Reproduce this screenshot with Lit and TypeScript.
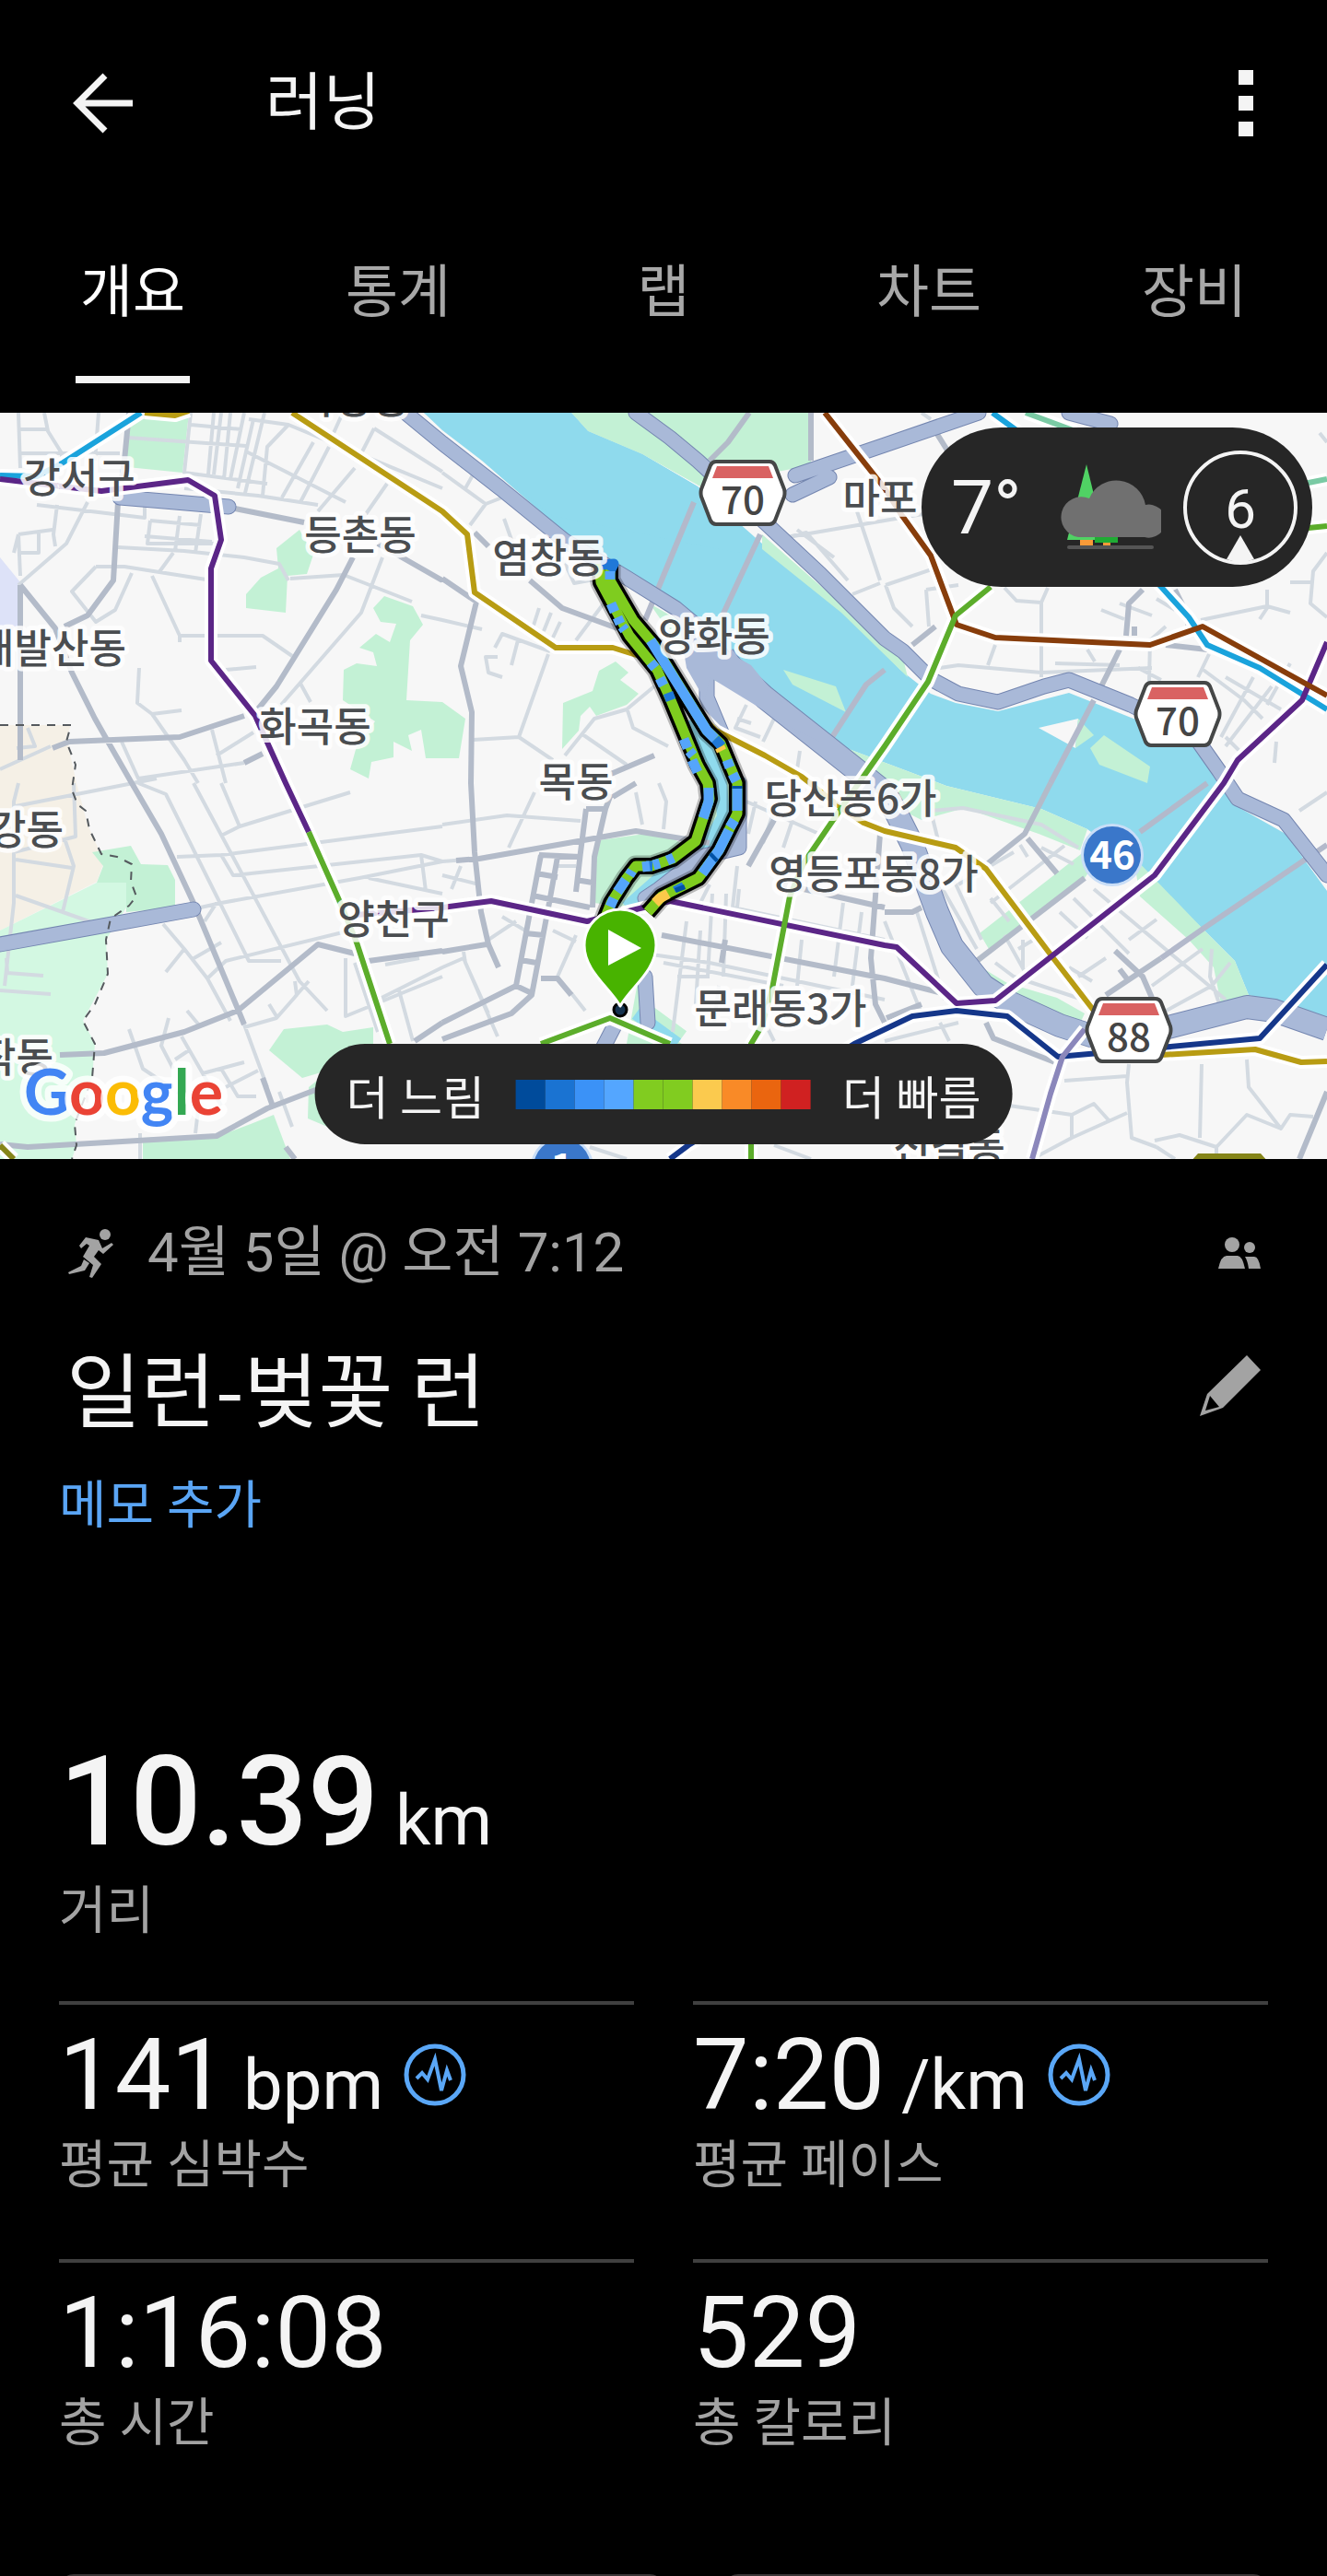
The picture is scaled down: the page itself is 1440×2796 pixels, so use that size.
import { LitElement, css, html, svg } from 'lit'
import { customElement, property, state } from 'lit/decorators.js'

interface Line {
  color: string
  d: string
}

interface Label {
  text: string
  x: number
  y: number
  anchor?: string
}

const minorRoads = [
  'M20 448L22 508M48 448L52 468 67 492 67 500M20 466H50M20 492H130M107 448L103 500M139 475L267 484M207 461L262 466M207 448L200 513 290 525M232 448L226 515M240 448L232 515M250 448L243 520M265 448L250 520M275 455L258 530M287 448L266 535M270 455L313 461 480 530M313 461L290 485 285 538M267 490L375 545M340 480L306 540M357 485L326 545M385 508L345 555M420 525L390 568M200 530L280 538 345 548M372 448L362 470M406 465L388 500M406 465L480 512',
  'M40 548L157 562V548M163 565L218 570M163 565L160 590H240M195 560L190 598M218 558L212 600M157 582L230 588M128 594L200 598 265 605 303 612 313 630M188 600L172 622M62 548L58 580 60 593M95 545L72 590 20 635M20 580L57 575M20 580L15 600M20 580L22 625M42 577V600H20M104 615H135L230 630M104 615L78 642 104 675 125 662 143 622M165 625L195 690H285L317 712M195 690V697M315 628L373 624 447 653M415 605L392 665 305 765M325 740L337 762M245 727L278 724M151 725L149 763 165 775 197 771M165 775L200 825 215 850M132 805L150 845 265 828M230 792L245 850M235 820L275 795M457 668L480 673M30 790L38 810 18 812M0 835L55 810',
  'M20 850L15 870V980L5 1070M17 875L170 845M80 850L82 908 15 925M70 910L80 940 68 990M17 933L78 942M17 972L105 1003M7 1040L8 1056 47 1059M0 1075L55 1079M150 850L180 862 270 1043H305M210 850L325 1065 355 1097M240 850L260 897 380 860M240 907L260 897M192 930L240 928 480 897M240 928L253 950 457 928 480 935M195 990L240 980 390 953 480 935M457 928L462 967M400 953L480 970M235 980L222 1000M177 1003L200 1030 225 1062 250 1108M200 1030L180 1055M207 1042L240 1023M225 1062L245 1043 380 1010M375 1040V1103L480 1060M385 1045L410 1120M410 1085L480 1050M418 1047L455 1040M433 1075L448 1130M320 1065L322 1080 300 1105 265 1115M292 1090L300 1103M335 1065L320 1082M265 1112L290 1180M140 1117L155 1160 200 1190M183 1105L175 1135 188 1160M197 1125L240 1200M203 1097L218 1115M190 1150L205 1140M220 1165L265 1153M240 1160L258 1190H278M280 1162L245 1180M303 1185L317 1223M152 1230V1258M215 1205L212 1230',
  'M480 513L527 547 545 540M527 547L510 570M515 512L505 530M547 563L560 600M610 605L623 633 650 628M655 655L625 695M480 673L523 683M537 703L545 688 597 707M562 695L555 722M585 660L577 685M598 665L590 685M608 675L600 692M540 713L527 713 530 730 545 735M595 710L563 800 600 825M513 803L563 800M710 745L680 770 645 780 613 820M632 797L680 830M680 768L687 790 725 810M855 583L960 565M855 583L875 578 920 630M930 555L955 630M925 645L955 633M865 575L905 605M810 765L798 790 825 800M800 780L815 785M828 805L840 780M868 815L865 835',
  'M480 895L550 885 630 891M580 860L552 920M480 935L520 932M480 950L520 960M500 940L490 965M605 940H625M600 1010L625 1022M545 995L570 1010M530 1020L560 1000M480 1050L503 1040 540 1125M503 1033L505 1045 530 1100M625 1015L605 1060M620 1078L635 1097M690 860L697 895M715 850L723 870 720 900M810 870L900 910M820 870L812 905M840 880L828 915M860 890L850 920M800 940L795 985 960 1020M770 960L760 980M745 1000L730 1120M760 1010L755 1090M720 1045L850 1070M700 1035L770 1045 960 1085M788 970L785 1060M773 970L768 1060M802 965L800 985M915 980L905 1060M935 990L925 1070M870 1020L865 1070M735 1060H770M780 1070L775 1110M830 1110L840 1130M640 1245L680 1258M840 1243L880 1258',
  'M960 565L1020 555M961 635L1020 615M961 635L970 660 990 680M1005 640L1008 680M1005 640L1040 635M1090 638L1103 652 1130 654 1137 638M1130 654V735M1020 725L1040 722 1130 730 1250 725M1080 700L1072 722M1145 720L1215 722M1180 705L1188 718M1195 662L1220 672M1215 655L1250 668M1255 650L1275 662M1303 673L1375 658 1400 665M1375 640V660L1367 672M1265 680L1248 695 1247 740M1235 725L1260 738M1312 710L1300 735M1303 725L1350 760 1370 780M1360 735L1325 800M1380 745L1330 810M1400 720L1375 765M1330 735L1390 770M1385 805L1383 828M1440 600L1425 620 1422 655 1440 670M1400 632H1425M1330 800L1350 820M1000 448L1010 455M1432 470L1440 480',
  'M1010 880L1045 877 1130 895 1170 920M1010 880L1020 920M1107 917L1115 930M1100 925L1040 960M1155 918L1075 980M1130 920L1165 938M1075 975L1095 1000M1020 960L1060 1030M1035 955L1065 1020M1187 965L1330 1085M1165 975L1225 1035M1150 990L1180 1018M1255 998L1225 1020M1335 1045L1315 1070 1260 1100M1305 1030L1250 1070M1090 1015L1115 1060M1105 1030L1125 1018M1080 1045L1100 1060 1220 1100M1170 1060L1200 1040M1160 1050L1185 1065M1110 1020V1050M1315 1030L1313 1060 1325 1095M960 1000L1000 1100M995 990L1025 1085M960 1130L1040 1110M1020 1110L1030 1130M1410 880L1440 860',
  'M1155 1173L1223 1168M1225 1155L1223 1175 1228 1235 1255 1245M1223 1208L1163 1235 1120 1258M1163 1235V1210L1187 1198 1205 1218M1095 1200L1163 1210M1304 1155L1302 1235M1253 1238L1280 1232 1320 1245 1353 1210 1390 1225M1353 1150L1355 1180 1390 1225 1400 1210 1425 1212M1255 1245L1275 1258M1320 1245V1258'
].join('')

const arterialRoads = [
  'M140 448L135 500 128 545 123 630 95 668 70 680M22 635V825M22 635L60 682 78 730 103 780 120 810 143 850 175 905 210 980 258 1095 265 1112M57 812L75 805 195 800 265 777M383 605L365 640 300 745 278 772M255 552L330 567M410 590L480 630M265 828L285 818',
  'M65 1145L113 1143 200 1120 258 1097 345 1025 385 1035M400 1043L480 1032M0 1242L30 1245 235 1233 290 1203 345 1182M285 1170L295 1198M310 1245L320 1258M450 1130L480 1110',
  'M515 578L530 593M480 628L517 653 500 723 512 773 511 850 515 925 522 990 530 1025 541 1050M575 630L610 660 670 682M813 448L790 480 770 500M880 448V500M710 820L663 840M480 1033L528 1025',
  'M495 934L520 932 690 902 770 915M636 878L630 925 625 968M663 862L657 878 645 930 643 985M636 878H657M585 928L630 930M587 928L578 975 560 1070 480 1110M605 930L596 980 577 1080 555 1100 480 1128M578 972L640 985M582 948L605 952M570 1013L590 1015M565 1042L582 1045M560 1070L577 1078M625 955L643 958M718 1015L960 1062 1030 1080M955 905L945 1040 950 1090 960 1110M587 1062H605L620 1080M665 865L690 850M840 890L812 940M850 960L960 985M787 1020L783 1045',
  'M1015 468L1035 500M1240 640L1225 655 1222 690M1231 680V690M1215 705L1195 745M1275 640L1285 660 1290 680M990 700L1015 680M1265 700L1310 705M1140 850L1112 905 1072 937M1115 910L1147 948M1177 953L1060 1043M1260 1040L1200 1080M1210 1032L1240 1060 1250 1083M1215 1052L1225 1065M1070 1110L1078 1127 1150 1155M1440 1185L1410 1258M960 990H990L1000 985M1000 1090L962 1105'
].join('')

const bridges = 'M753 545L700 673M825 580L783 670M960 727L940 743 903 800M1187 760L1140 850M1310 850L1237 903M1440 917L1307 1007 1260 1040'

const wideHighways = 'M785 712L793 723 830 757 897 810 960 860 973 883 990 917 1017 990 1033 1027 1067 1070 1093 1087 1150 1113 1193 1127 1260 1117 1353 1093 1383 1097 1440 1117'

const highways = [
  'M440 448L480 481 543 530 613 587 680 627 733 660 763 685 793 723',
  'M690 448L727 475 757 500 830 567 890 623 960 693 980 707 1010 737 1040 753 1083 762 1133 745 1160 738 1227 765 1297 800 1323 837 1343 867 1393 890 1440 950',
  'M863 516L960 483 1062 448M1160 448L1205 460M130 540L190 545 248 550M0 1025L210 987M767 700V757L785 800M802 850V920L760 930 715 965 700 975M700 1060L703 1110M667 1113L653 1140M860 537L900 518'
].join('')

const parks = [
  'M620 448H880V505L760 528 697 493 638 468Z',
  'M138 455L205 448 198 513 138 507Z',
  'M325 575L340 602 333 623 312 625 310 665 267 660V645L283 627 302 617 300 595Z',
  'M417 647L448 658 459 678 445 695 441 760 480 762 505 780 498 823H462L457 792 443 798 447 815 427 805V822L403 827 400 845 380 835 387 810 407 783 372 760 373 727 387 720 409 723 405 708 390 703 408 688 423 697 430 677 413 675 405 660Z',
  'M668 718L682 730 673 738 693 753 680 765 647 777 640 767 630 777 628 793 610 813 611 763 643 750 650 728Z',
  'M100 925L142 918 153 938 182 939 190 955V985L137 990V958H105L112 940Z',
  'M308 1117L355 1112 372 1120 405 1115V1145L345 1165 328 1170 292 1140Z',
  'M335 1180L360 1160V1225L334 1214Z',
  'M155 1258V1235L240 1232 272 1220 297 1210 315 1258Z',
  'M650 912L700 905 730 910 765 930 710 955 680 985 645 980V950Z',
  'M787 703L813 730 913 810 1027 853 1130 878 1180 900 1172 923 1127 905 1047 877 1000 890 940 860 813 748 760 735 705 655Z',
  'M1173 927L1200 920 1177 953 1073 1030 1063 1013Z',
  'M1060 1047L1093 1067 1147 1083 1177 1100 1170 1115 1090 1090Z',
  'M1230 930L1307 1010 1340 1043 1355 1080 1383 1087 1327 1100 1317 1050 1290 1020 1237 973Z',
  'M693 1060L705 1110 740 1133H680Z'
].join('')

const northBank = 'M827 580L980 715 985 735 913 665 827 596Z'

const islands = 'M850 727L907 745 918 773 860 743ZM1170 780L1187 798 1167 812ZM1198 798L1248 832 1245 850 1193 830 1183 812Z'

const river = 'M460 448H620L638 468 697 493 757 528 827 590 847 603 913 660 977 727 1010 753 1037 763 1083 772 1160 752 1230 780 1297 810 1317 838 1347 878 1395 905 1440 967V1112L1383 1087 1355 1080 1340 1043 1307 1010 1283 987 1247 950 1180 900 1130 878 1027 853 913 810 813 730 787 703 757 670 710 640 680 620 623 587 607 573 523 500 480 467Z'

const stream = 'M753 780L782 850 785 887 770 912 725 945 680 985M690 1100L735 1133'

const subwayLines: Line[] = [
  { color: '#b89c13', d: 'M157 448L190 451 205 446M317 448L480 555 507 580 515 643 603 703H665L697 713 777 793 830 820 870 843 913 877 937 893 960 902 1037 920 1070 943 1143 1040 1187 1097 1230 1147 1260 1145 1362 1139 1412 1153 1440 1152' },
  { color: '#1aa3dc', d: 'M0 516L40 517 67 503 153 448M1077 448L1103 467 1260 637 1290 670 1310 700 1367 725 1440 770' },
  { color: '#5b2687', d: 'M0 520L110 533 204 521 233 538 240 586 229 617V717L277 777 310 850 335 903M387 993L480 985 533 978 637 1000 727 978 960 1026 973 1028 1038 1089 1080 1086 1253 950 1328 850 1343 825 1413 760 1440 697' },
  { color: '#873d0b', d: 'M895 448L960 530 977 557 1010 603 1035 670 1038 678 1080 692 1248 700 1305 680 1440 755' },
  { color: '#15378a', d: 'M1440 1047L1367 1127 1260 1137 1148 1147 1093 1103 1038 1097 990 1103 927 1133 747 1243 727 1258' },
  { color: '#5cad2b', d: 'M335 903L368 977 387 1023 423 1133M1440 571L1410 574M1075 637L1037 668 1007 740 960 810 913 877 872 937 857 973 838 1073 827 1113 815 1133V1258M587 1133L662 1105 727 1133' },
  { color: '#7acaa4', d: 'M1113 448L1167 468M1410 526L1440 520' },
  { color: '#8b87bb', d: 'M1177 1117L1153 1147 1140 1187 1120 1258' },
  { color: '#858519', d: 'M0 1243L15 1258' }
]

const outbound = 'M650 612L652 632 683 690 713 727 728 760 757 830 768 850 770 867 755 913 730 932 707 940 690 940 680 953 663 980 655 1000'
const inbound = 'M662 613V630L687 673 710 700 767 793 782 807 800 850 800 883 780 923 758 953 718 973 703 990'

// Slow and fast stretches, laid over the steady green pace
const paceStretches: Line[] = [
  { color: '#1f78d8', d: 'M652 613L666 612 662 620M725 752L728 760M776 802L783 810M701 940L708 940M735 960L738 966' },
  { color: '#55a5fb', d: 'M662 620V629M663 655L667 664M670 670L673 677M675 680L678 684M706 695L767 793 776 802M706 719L711 725M716 736L720 744M742 802L746 812M748 815L752 820M751 825L757 838M769 855L769 870 763 888M697 941L705 940M709 939L716 937M724 934L731 931M686 945L683 950M679 955L670 968M666 975L662 984M789 825L792 833M795 840L799 848M800 856V880M797 890L792 898M791 901L780 923 762 948' },
  { color: '#0051a5', d: 'M800 853V856M776 929L773 932M737 962L739 967' },
  { color: '#fbc94a', d: 'M725 970L716 975 711 980M781 811L783 815' }
]

const labels: Label[] = [
  { text: '가양동', x: 384, y: 449 },
  { text: '강서구', x: 86, y: 535 },
  { text: '등촌동', x: 391, y: 597 },
  { text: '내발산동', x: 137, y: 720, anchor: 'end' },
  { text: '고강동', x: 69, y: 917, anchor: 'end' },
  { text: '화곡동', x: 342, y: 805 },
  { text: '염창동', x: 595, y: 622 },
  { text: '양화동', x: 775, y: 707 },
  { text: '마포', x: 955, y: 557 },
  { text: '목동', x: 625, y: 865 },
  { text: '당산동6가', x: 923, y: 883 },
  { text: '영등포동8가', x: 948, y: 965 },
  { text: '양천구', x: 427, y: 1014 },
  { text: '문래동3가', x: 847, y: 1111 },
  { text: '작동', x: 58, y: 1164, anchor: 'end' },
  { text: '신길동', x: 1030, y: 1262 }
]

const shields = [
  { text: '70', x: 806, y: 535 },
  { text: '70', x: 1278, y: 775 },
  { text: '88', x: 1225, y: 1118 }
]

const circleShields = [
  { text: '46', x: 1207, y: 928 },
  { text: '1', x: 610, y: 1267 }
]

@customElement('route-map')
export class RouteMap extends LitElement {
  static get styles() {
    return css`
      :host {
        display: block;
      }
      svg {
        display: block;
        width: 100%;
      }
      path {
        stroke-linejoin: round;
      }
      .line {
        fill: none;
      }
      .land { fill: #f7f7f7; }
      .town { fill: #f5f0e6; }
      .meadow { fill: #d3f8e2; }
      .airport { fill: #dde2f8; }
      .park { fill: #c3f1d5; }
      .water { fill: #8fdaed; }
      .stream { stroke: #8fdaed; stroke-width: 14; }
      .stream-bank { stroke: #c3f1d5; stroke-width: 34; }
      .minor { stroke: #d3dae1; stroke-width: 4; }
      .arterial { stroke: #b3bbc9; stroke-width: 6; }
      .bridge { stroke: #b3b9cb; stroke-width: 6; }
      .wide-highway-edge { stroke: #7486b0; stroke-width: 26; }
      .wide-highway { stroke: #a9b9d8; stroke-width: 24; }
      .highway-edge { stroke: #7486b0; stroke-width: 17; stroke-linecap: round; }
      .highway { stroke: #a9b9d8; stroke-width: 15; stroke-linecap: round; }
      .junction { fill: #a9b9d8; }
      .border { stroke: #555a5e; stroke-width: 2; stroke-dasharray: 9 8; }
      .subway-edge { stroke: #fff; stroke-width: 14; }
      .subway { stroke-width: 6; }
      .shadow { stroke: #000; stroke-width: 18; }
      .glow { stroke: #000; stroke-width: 23; opacity: 0.25; }
      .pace { stroke: #7fcc1f; stroke-width: 11; }
      .stretch { stroke-width: 11; }
      .label {
        font: 500 44px 'Noto Sans CJK KR', sans-serif;
        fill: #4a4d50;
        stroke: rgba(255, 255, 255, 0.85);
        stroke-width: 10px;
        stroke-linejoin: round;
        paint-order: stroke;
      }
      .shield-text {
        font: 500 42px 'Noto Sans CJK KR', sans-serif;
        fill: #454545;
      }
      .circle-text {
        font: 700 42px 'Noto Sans CJK KR', sans-serif;
        fill: #fff;
      }
      .google {
        font: 700 68px Lato, sans-serif;
        stroke: rgba(255, 255, 255, 0.8);
        stroke-width: 14px;
        stroke-linejoin: round;
        paint-order: stroke;
      }
      .blue { fill: #4285f4; }
      .red { fill: #ea4335; }
      .yellow { fill: #fbbc05; }
      .green { fill: #34a853; }
    `
  }

  private _renderShield(text: string, x: number, y: number) {
    return svg`
      <g transform="translate(${x} ${y})">
        <path d="M-29 -34H29Q33 -34 35 -30L45 -4Q46 0 45 4L35 30Q33 34 29 34H-29Q-33 34 -35 30L-45 4Q-46 0 -45 -4L-35 -30Q-33 -34 -29 -34Z" fill="#fff" stroke="#454747" stroke-width="4" />
        <path d="M-28 -29H28L33 -16H-33Z" fill="#d96262" />
        <text class="shield-text" y="23" text-anchor="middle">${text}</text>
      </g>
    `
  }

  render() {
    return html`
      <svg viewBox="0 448 1440 810" role="img" aria-label="러닝 경로">
        <rect class="land" y="448" width="1440" height="810" />
        <path class="town" d="M0 787H77L72 800 83 850 95 895 113 935 105 957 0 1010Z" />
        <path class="meadow" d="M137 958H105L0 1010V1258H78L83 1243 81 1220 100 1170 103 1133 90 1108 117 1057 115 1020 137 985Z" />
        <path class="airport" d="M0 605L22 632V680L0 690Z" />
        <path class="water" d=${river} />
        <path class="park" d=${parks} />
        <path class="water" d="M460 448H620L638 468 697 493 757 528 827 596 800 600 600 560Z" />
        <path class="park" d=${northBank} />
        <path class="land" d="M1127 790L1170 780 1167 812Z" />
        <path class="park" d=${islands} />
        <path class="line stream-bank" d=${stream} />
        <path class="line stream" d=${stream} />
        <path class="line minor" d=${minorRoads} />
        <path class="line arterial" d=${arterialRoads} />
        <path class="line bridge" d=${bridges} />
        <path class="line wide-highway-edge" d=${wideHighways} />
        <path class="line highway-edge" d=${highways} />
        <path class="line wide-highway" d=${wideHighways} />
        <path class="line highway" d=${highways} />
        <path class="junction" d="M735 665L785 705 815 722 850 765 890 805 860 790 770 735 765 760 745 725Z" />
        <path class="line border" d="M0 787H77L72 805 82 830 78 857 84 873 93 880 97 900 110 927 127 930 143 938 142 957 148 973 140 983 120 997 115 1020 117 1057 103 1090 90 1108 103 1133 100 1170 81 1220 83 1243 78 1258" />
        ${subwayLines.map(line => svg`<path class="line subway-edge" d=${line.d} />`)}
        ${subwayLines.map(line => svg`<path class="line subway" stroke=${line.color} d=${line.d} />`)}
        <path d="M1291 1262L1300 1252H1368L1377 1262Z" fill="#858519" />
        <path class="line glow" d=${outbound + inbound} />
        <path class="line shadow" d=${outbound + inbound} />
        <path class="line pace" d=${outbound + inbound} />
        ${paceStretches.map(line => svg`<path class="line stretch" stroke=${line.color} d=${line.d} />`)}
        ${labels.map(label => svg`
          <text class="label" x=${label.x} y=${label.y} text-anchor=${label.anchor ?? 'middle'}>${label.text}</text>
        `)}
        ${shields.map(shield => this._renderShield(shield.text, shield.x, shield.y))}
        ${circleShields.map(shield => svg`
          <circle cx=${shield.x} cy=${shield.y} r="34" fill="#c9def7" />
          <circle cx=${shield.x} cy=${shield.y} r="31" fill="#3a77ca" />
          <text class="circle-text" x=${shield.x} y=${shield.y + 15} text-anchor="middle">${shield.text}</text>
        `)}
        <circle cx="673" cy="1096" r="7" fill="#15324f" stroke="#000" stroke-width="3" />
        <path d="M673 1092C662 1072 634 1054 634 1026A39 39 0 0 1 712 1026C712 1054 684 1072 673 1092Z" fill="#48b300" stroke="#fff" stroke-width="3" />
        <path d="M660 1009L696 1029 660 1048Z" fill="#fff" />
        <text class="google" x="26" y="1210"><tspan class="blue">G</tspan><tspan class="red">o</tspan><tspan class="yellow">o</tspan><tspan class="blue">g</tspan><tspan class="green">l</tspan><tspan class="red">e</tspan></text>
      </svg>
    `
  }
}

@customElement('stat-cell')
export class StatCell extends LitElement {

  @property({ type: String })
  value = ''

  @property({ type: String })
  unit = ''

  @property({ type: String })
  label = ''

  @property({ type: Boolean })
  chart = false

  @property({ type: Boolean })
  large = false

  static get styles() {
    return css`
      :host {
        display: block;
        border-top: 4px solid #404040;
        padding: 16px 0 64px;
      }
      :host([large]) {
        border-top: none;
        padding: 0 0 60px;
      }
      .row {
        display: flex;
        align-items: center;
        gap: 22px;
      }
      .reading {
        display: flex;
        align-items: baseline;
        gap: 18px;
        color: #f4f4f4;
      }
      .value {
        font-size: 108px;
        line-height: 120px;
      }
      .unit {
        font-size: 76px;
        line-height: 76px;
      }
      .large .value {
        font-size: 136px;
        font-weight: 500;
        line-height: 160px;
      }
      .label {
        color: #a3a3a3;
        font-size: 56px;
        line-height: 76px;
      }
      button {
        display: flex;
        padding: 0;
        border: none;
        background: none;
        cursor: pointer;
      }
    `
  }

  render() {
    return html`
      <div class=${this.large ? 'large' : ''}>
        <div class="row">
          <div class="reading">
            <span class="value">${this.value}</span>
            ${this.unit ? html`<span class="unit">${this.unit}</span>` : ''}
          </div>
          ${this.chart ? html`
            <button aria-label="${this.label} 차트">
              <svg width="68" height="68" viewBox="0 0 68 68" fill="none" stroke="#5aa7f7">
                <circle cx="34" cy="34" r="31" stroke-width="5" />
                <path d="M14 38L20 32 26 39 34 17 41 51 47 29 51 40" stroke-width="4" />
              </svg>
            </button>
          ` : ''}
        </div>
        <div class="label">${this.label}</div>
      </div>
    `
  }
}

@customElement('app-root')
export class AppRoot extends LitElement {

  @state()
  _selectedTab = '개요'

  private _tabs = ['개요', '통계', '랩', '차트', '장비']

  private _paceColors = ['#004b9b', '#1a73d2', '#3b92f7', '#54a6ff', '#81cc20', '#81cc20', '#fbca4e', '#f98a27', '#ea650f', '#d02121']

  static get styles() {
    return css`
      :host {
        display: block;
        height: 100vh;
        overflow-y: auto;
        scrollbar-width: none;
        background: #000;
        color: #f4f4f4;
        font-family: Roboto, 'Noto Sans CJK KR', sans-serif;
      }
      button {
        display: flex;
        align-items: center;
        justify-content: center;
        padding: 0;
        border: none;
        background: none;
        color: inherit;
        font: inherit;
        cursor: pointer;
      }
      h1, h2 {
        margin: 0;
        font-weight: 400;
      }
      .app-bar {
        display: flex;
        align-items: center;
        height: 224px;
        padding: 0 40px 0 64px;
      }
      .app-bar button {
        width: 96px;
        height: 96px;
      }
      .app-bar h1 {
        flex: 1;
        padding-left: 128px;
        font-size: 68px;
        line-height: 96px;
      }
      .tabs {
        display: grid;
        grid-template-columns: repeat(5, 1fr);
        padding-bottom: 32px;
      }
      .tab {
        color: #a8a8a8;
        font-size: 62px;
      }
      .tab span {
        padding: 4px 5px 0;
        border-bottom: 8px solid transparent;
        line-height: 180px;
      }
      .tab.selected {
        color: #fff;
      }
      .tab.selected span {
        border-color: #f4f4f4;
      }
      .map {
        position: relative;
      }
      .weather {
        position: absolute;
        top: 16px;
        right: 16px;
        display: flex;
        align-items: center;
        gap: 24px;
        height: 173px;
        padding: 0 16px 0 32px;
        border-radius: 87px;
        background: #262626;
      }
      .temperature {
        width: 92px;
        font-size: 82px;
        line-height: 96px;
      }
      .wind-speed {
        fill: #f4f4f4;
        font-size: 60px;
      }
      .legend {
        position: absolute;
        bottom: 16px;
        left: 50%;
        display: flex;
        align-items: center;
        gap: 34px;
        height: 109px;
        padding: 0 34px;
        border-radius: 55px;
        background: #262626;
        font-size: 50px;
        white-space: nowrap;
        transform: translateX(-50%);
      }
      .scale {
        display: flex;
      }
      .scale span {
        width: 32px;
        height: 32px;
      }
      .details {
        padding: 66px 64px 0;
      }
      .date-row {
        display: flex;
        align-items: center;
        height: 72px;
        padding: 0 8px;
        color: #a3a3a3;
        font-size: 60px;
        line-height: 72px;
      }
      .date-row time {
        flex: 1;
        padding-left: 34px;
      }
      .title-row {
        display: flex;
        align-items: center;
        justify-content: space-between;
        padding: 48px 8px 32px;
      }
      .title-row h2 {
        font-family: 'Noto Sans CJK KR', sans-serif;
        font-size: 88px;
        line-height: 120px;
      }
      .memo {
        color: #5aa5f5;
        font-size: 56px;
        line-height: 76px;
      }
      .stats {
        display: grid;
        grid-template-columns: 1fr 1fr;
        column-gap: 64px;
        padding: 204px 0 62px;
      }
      .stats [large] {
        grid-column: 1 / -1;
      }
      .cards {
        display: grid;
        grid-template-columns: 10fr 9fr;
        gap: 64px;
      }
      .card {
        height: 64px;
        border-radius: 16px;
        background: #3a3637;
      }
    `
  }

  render() {
    return html`
      <header>
        <div class="app-bar">
          <button aria-label="뒤로">
            <svg width="66" height="66" viewBox="0 0 66 66" fill="none" stroke="#f4f4f4" stroke-width="7">
              <path d="M65 33H6M35 3L5 33 35 63" />
            </svg>
          </button>
          <h1>러닝</h1>
          <button aria-label="더보기">
            <svg width="16" height="72" viewBox="0 0 16 72" fill="#f4f4f4">
              <path d="M0 0H16V16H0ZM0 28H16V44H0ZM0 56H16V72H0Z" />
            </svg>
          </button>
        </div>
        <nav class="tabs">
          ${this._tabs.map(tab => html`
            <button
              class="tab ${tab === this._selectedTab ? 'selected' : ''}"
              @click=${() => { this._selectedTab = tab }}
            ><span>${tab}</span></button>
          `)}
        </nav>
      </header>
      <section class="map">
        <route-map></route-map>
        <div class="weather">
          <span class="temperature">7°</span>
          <svg width="112" height="94" viewBox="0 0 112 94">
            <path d="M31 0L51 82H10Z" fill="#50d264" />
            <path d="M40 78H65V85H40Z" fill="#20ab34" />
            <path d="M24 82H38V89H24ZM49 85H57V89H49Z" fill="#f89a38" />
            <path d="M12 90H102" stroke="#555" stroke-width="4" stroke-linecap="round" />
            <path d="M22 79A22 22 0 1 1 34 37A32 32 0 0 1 95 44A18 18 0 1 1 94 79Z" fill="#707070" />
          </svg>
          <svg width="124" height="124" viewBox="0 0 124 124">
            <circle cx="62" cy="62" r="60" fill="none" stroke="#f4f4f4" stroke-width="4" />
            <path d="M62 92L77 118Q62 124 47 118Z" fill="#f4f4f4" />
            <text class="wind-speed" x="62" y="84" text-anchor="middle">6</text>
          </svg>
        </div>
        <div class="legend">
          <span>더 느림</span>
          <div class="scale">
            ${this._paceColors.map(color => html`<span style="background: ${color}"></span>`)}
          </div>
          <span>더 빠름</span>
        </div>
      </section>
      <main class="details">
        <div class="date-row">
          <svg width="54" height="56" viewBox="0 0 54 56" fill="#a3a3a3">
            <circle cx="42" cy="8" r="6" />
            <path d="M14 20L21 11 35 14 39 23 49 17 51 19 40 29 35 25 30 32 38 40 28 55 25 54 29 41 18 32 25 20 22 18 16 23Z" />
            <path d="M19 35L25 39 20 47 3 51 2 49 16 42Z" />
          </svg>
          <time>4월 5일 @ 오전 7:12</time>
          <svg width="46" height="34" viewBox="0 0 46 34" fill="#a3a3a3">
            <circle cx="15" cy="8" r="8" />
            <circle cx="34" cy="11" r="6" />
            <path d="M0 34Q3 20 9 20H21Q26 20 29 34ZM29 21H39Q44 21 46 34H33Q32 26 29 21Z" />
          </svg>
        </div>
        <div class="title-row">
          <h2>일런-벚꽃 런</h2>
          <button aria-label="이름 편집">
            <svg width="66" height="66" viewBox="0 0 66 66" fill="#a3a3a3" fill-rule="evenodd">
              <path d="M51 0L66 16 25 57 0 66 8 42ZM11 44L6 60 21 56Z" />
            </svg>
          </button>
        </div>
        <button class="memo">메모 추가</button>
        <div class="stats">
          <stat-cell large value="10.39" unit="km" label="거리"></stat-cell>
          <stat-cell chart value="141" unit="bpm" label="평균 심박수"></stat-cell>
          <stat-cell chart value="7:20" unit="/km" label="평균 페이스"></stat-cell>
          <stat-cell value="1:16:08" label="총 시간"></stat-cell>
          <stat-cell value="529" label="총 칼로리"></stat-cell>
        </div>
        <div class="cards">
          <div class="card"></div>
          <div class="card"></div>
        </div>
      </main>
    `
  }
}
